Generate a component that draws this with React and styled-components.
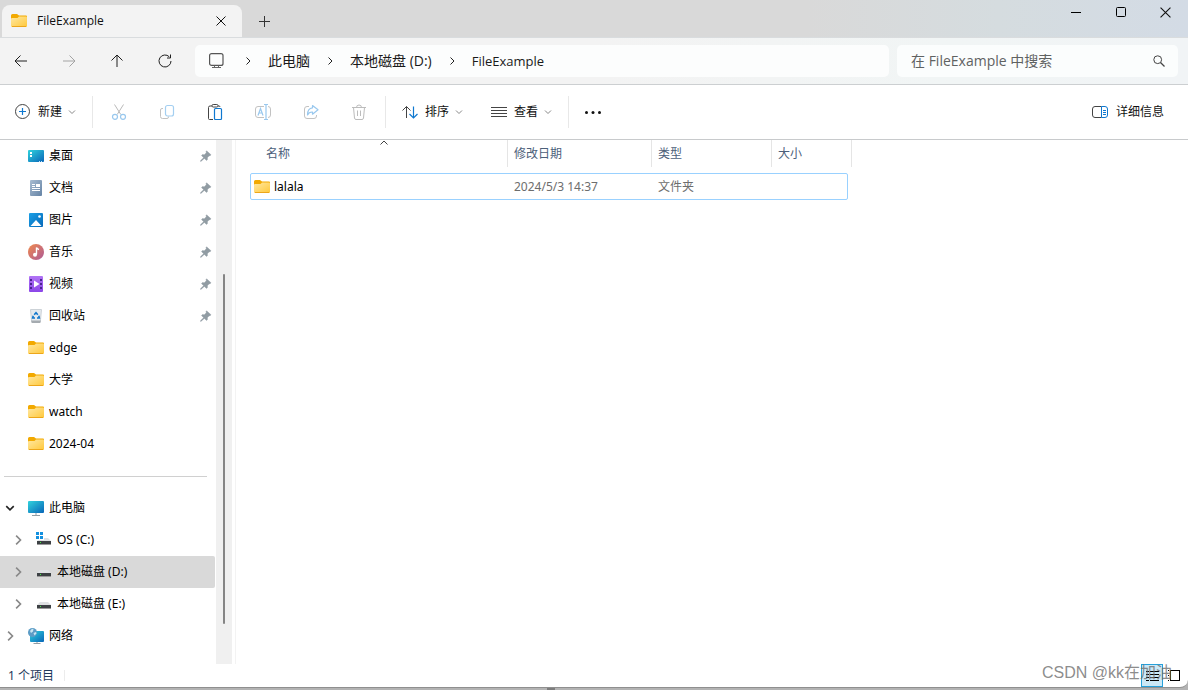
import React from 'react';
import styled, { createGlobalStyle, css } from 'styled-components';

const GlobalStyle = createGlobalStyle`
  * {
    box-sizing: border-box;
  }
  body {
    margin: 0;
    background: #ffffff;
    font-family: 'Noto Sans', 'Noto Sans CJK SC', sans-serif;
    font-size: 12px;
    line-height: 16px;
    color: #000000;
  }
  button, input {
    font: inherit;
    color: inherit;
  }
`;

const plainButton = css`
  display: flex;
  align-items: center;
  padding: 0;
  border: none;
  background: transparent;
`;

const Desktop = styled.div`
  display: flex;
  flex-direction: column;
  min-height: 100vh;
  background: #b3b3b3;
`;

const Window = styled.div`
  display: flex;
  flex: 1;
  flex-direction: column;
  border-bottom: 1px solid #8f8f8f;
  border-radius: 0 0 8px 0;
  background: #ffffff;
`;

/* ---------- title bar ---------- */

const TitleBar = styled.header`
  display: flex;
  align-items: flex-end;
  height: 38px;
  padding-left: 2px;
  border-bottom: 1px solid #d9dcde;
  background: linear-gradient(90deg, #d9d9d9 0%, #d9d9d9 68%, #d5dcdf 84%, #d3dbe5 100%);
`;

const Tab = styled.div`
  display: flex;
  align-items: center;
  width: 240px;
  height: 32px;
  padding: 0 12px 0 9px;
  border-radius: 8px 8px 0 0;
  background: #f3f3f3;
  gap: 10px;
`;

const TabTitle = styled.span`
  flex: 1;
  font-family: 'Open Sans', sans-serif;
  font-weight: 500;
  line-height: 18px;
  color: #111111;
`;

const SmallButton = styled.button`
  ${plainButton}
  justify-content: center;
  width: 18px;
  height: 18px;
`;

const NewTabButton = styled(SmallButton)`
  width: 44px;
  height: 32px;
`;

const WindowControls = styled.div`
  display: flex;
  align-self: flex-start;
  margin-left: auto;
`;

const WindowButton = styled.button`
  ${plainButton}
  justify-content: center;
  width: 45px;
  height: 24px;
`;

/* ---------- navigation bar ---------- */

const NavBar = styled.div`
  display: flex;
  align-items: center;
  height: 47px;
  padding: 0 10px 0 3px;
  gap: 12px;
  border-bottom: 1px solid #cccfd1;
  background: linear-gradient(90deg, #f3f3f3 0%, #f3f3f3 50%, #f1f5f5 80%, #f1f4f6 100%);
`;

const NavButton = styled.button`
  ${plainButton}
  justify-content: center;
  width: 36px;
  height: 36px;
  color: ${({ disabled }) => (disabled ? '#a3a3a3' : '#1f1f1f')};
`;

const Fields = styled.div`
  display: flex;
  flex: 1;
  gap: 8px;
`;

const Address = styled.nav`
  display: flex;
  flex: 1;
  align-items: center;
  height: 32px;
  padding-left: 11px;
  gap: 16px;
  border-radius: 5px;
  background: #fcfdfd;
`;

const Crumb = styled.button`
  ${plainButton}
  font-family: 'Open Sans', 'Noto Sans CJK SC', sans-serif;
  font-size: ${({ $current }) => ($current ? '13px' : '14px')};
  line-height: 20px;
  color: #1a1a1a;
  white-space: nowrap;
`;

const SearchBox = styled.label`
  display: flex;
  align-items: center;
  width: 281px;
  height: 32px;
  padding: 0 13px 0 14px;
  border-radius: 5px;
  background: #fbfdfd;
`;

const SearchInput = styled.input`
  flex: 1;
  min-width: 0;
  padding: 0;
  border: none;
  outline: none;
  background: transparent;
  font-family: 'Open Sans', 'Noto Sans CJK SC', sans-serif;
  font-size: 14px;
  line-height: 20px;
  &::placeholder {
    color: #5f6262;
    opacity: 1;
  }
`;

/* ---------- command bar ---------- */

const CommandBar = styled.div`
  display: flex;
  align-items: center;
  height: 55px;
  padding: 0 10px 0 1px;
  border-bottom: 1px solid #c8cacc;
`;

const CommandButton = styled.button`
  ${plainButton}
  height: 36px;
  padding: 0 14px;
  color: #111111;
  white-space: nowrap;
`;

const CommandLabel = styled.span`
  margin: 0 6px 0 7px;
`;

const DetailsButton = styled(CommandButton)`
  margin-left: auto;
  gap: 8px;
`;

const IconButton = styled.button`
  ${plainButton}
  justify-content: center;
  width: ${({ $narrow }) => ($narrow ? '44px' : '48px')};
  height: 36px;
`;

const Divider = styled.span`
  width: 1px;
  height: 32px;
  margin: 0 2px;
  background: #e8e8e8;
`;

/* ---------- body ---------- */

const Body = styled.div`
  display: flex;
  flex: 1;
`;

const Sidebar = styled.aside`
  width: 216px;
  padding: 0 1px 12px 0;
`;

const SideItem = styled.a`
  display: flex;
  align-items: center;
  height: 32px;
  padding: 0 3px 0 ${({ $level }) => ($level === 2 ? '12px' : '4px')};
  border-radius: 0 2px 2px 0;
  background: ${({ $selected }) => ($selected ? '#d9d9d9' : 'transparent')};
  color: #000000;
  text-decoration: none;
`;

const Expander = styled.span`
  display: flex;
  justify-content: center;
  width: 12px;
  margin-right: 12px;
`;

const SideLabel = styled.span`
  flex: 1;
  margin-left: 5px;
`;

const SideSeparator = styled.hr`
  height: 1px;
  margin: 16px 8px 15px 4px;
  border: none;
  background: #d0d0d0;
`;

const ScrollRail = styled.div`
  position: relative;
  width: 16px;
  margin-right: 3px;
  background: #f0f0f0;
`;

const ScrollThumb = styled.div`
  position: absolute;
  top: 25.6%;
  left: 7px;
  width: 2px;
  height: 66.8%;
  border-radius: 1px;
  background: #858585;
`;

const Content = styled.main`
  flex: 1;
  padding-left: 14px;
  border-left: 1px solid #f3f3f3;
`;

const FileTable = styled.table`
  display: block;
`;

const TableHead = styled.thead`
  display: block;
`;

const TableBody = styled.tbody`
  display: block;
`;

const HeadRow = styled.tr`
  display: grid;
  grid-template-columns: 248px 144px 120px 80px;
  padding-left: 10px;
`;

const HeadCell = styled.th`
  position: relative;
  height: 27px;
  padding: 6px;
  border-right: 1px solid #e5e5e5;
  font-weight: 400;
  text-align: left;
  color: #4c607a;
`;

const SortMark = styled.span`
  position: absolute;
  top: 0;
  left: 50%;
  display: flex;
  transform: translateX(-50%);
`;

const FileRow = styled.tr`
  display: grid;
  grid-template-columns: 257px 144px 120px 75px;
  width: 598px;
  height: 27px;
  margin-top: 6px;
  border: 1px solid #99d1ff;
  border-radius: 2px;
`;

const Cell = styled.td`
  display: flex;
  align-items: center;
  padding: 0 6px;
  color: #6d6d6d;
`;

const NameCell = styled(Cell)`
  padding: 0 3px;
  gap: 4px;
  color: #000000;
`;

/* ---------- status bar ---------- */

const StatusBar = styled.footer`
  position: relative;
  display: flex;
  align-items: center;
  height: 23px;
  padding: 0 3px 0 8px;
  color: #1e395b;
`;

const StatusDivider = styled.span`
  width: 1px;
  height: 11px;
  margin-left: 10px;
  background: #ececec;
`;

const ViewButtons = styled.div`
  display: flex;
  margin-left: auto;
`;

const ViewButton = styled.button`
  ${plainButton}
  justify-content: center;
  width: 22px;
  height: 23px;
  border: 1px solid ${({ $active }) => ($active ? '#26a0da' : 'transparent')};
  background: ${({ $active }) => ($active ? '#cbe8f6' : 'transparent')};
`;

const Watermark = styled.span`
  position: absolute;
  top: 0;
  right: 16px;
  font-family: 'Liberation Sans', 'Noto Sans CJK SC', sans-serif;
  font-size: 16px;
  line-height: 18px;
  color: rgba(110, 110, 110, 0.8);
  pointer-events: none;
`;

const BottomEdge = styled.div`
  display: flex;
  justify-content: center;
  height: 2px;
  padding-right: 86px;
`;

const EdgeGrip = styled.span`
  width: 8px;
  background: #7d7d7d;
`;

/* ---------- icons ---------- */

const Svg = ({ size = 16, width, height, children, ...rest }) => (
  <svg
    width={width || size}
    height={height || size}
    viewBox={`0 0 ${width || size} ${height || size}`}
    fill="none"
    aria-hidden="true"
    {...rest}
  >
    {children}
  </svg>
);

const FolderIcon = () => (
  <Svg>
    <defs>
      <linearGradient id="folderFace" x1="0" y1="0" x2="1" y2="1">
        <stop offset="0" stopColor="#ffe8a2" />
        <stop offset="1" stopColor="#ffc83a" />
      </linearGradient>
    </defs>
    <path d="M0 2.5Q0 1 1.5 1H6L8 2.5H15Q16 2.5 16 3.5V8H0Z" fill="#f2a900" />
    <path d="M0 6Q0 5 1 5H6.500L8 3.500H15Q16 3.500 16 4.500V13Q16 14 15 14H1Q0 14 0 13Z" fill="url(#folderFace)" />
    <path d="M1 13.500H15" stroke="#eda61a" />
  </Svg>
);

const DesktopIcon = () => (
  <Svg>
    <defs>
      <linearGradient id="blueScreen" x1="0" y1="0" x2="1" y2="1">
        <stop offset="0" stopColor="#31d3dd" />
        <stop offset="1" stopColor="#0865b8" />
      </linearGradient>
    </defs>
    <rect y="2" width="16" height="12" rx="1" fill="url(#blueScreen)" />
    <path d="M2 4h2v2H2zM2 7h2v2H2z" fill="#fff" />
    <path d="M11 13.500h1M13 13.500h1" stroke="#bfe3ff" />
  </Svg>
);

const DocumentIcon = () => (
  <Svg>
    <defs>
      <linearGradient id="docFace" x1="0" y1="0" x2="1" y2="1">
        <stop offset="0" stopColor="#a9bdd2" />
        <stop offset="1" stopColor="#6583a5" />
      </linearGradient>
    </defs>
    <rect x="2" width="12" height="16" rx="1" fill="url(#docFace)" />
    <path d="M4 4.500h3M4 6.500h3M4 8.500h8M4 10.500h8" stroke="#fff" />
    <path d="M8 4h4v3H8z" fill="#fff" />
  </Svg>
);

const PictureIcon = () => (
  <Svg>
    <defs>
      <linearGradient id="picFace" x1="0" y1="0" x2="1" y2="1">
        <stop offset="0" stopColor="#1ba0e6" />
        <stop offset="1" stopColor="#0668b9" />
      </linearGradient>
    </defs>
    <rect x="1" y="1" width="14" height="14" rx="1" fill="url(#picFace)" />
    <path d="M2.500 14L8 8l5.500 6z" fill="#fff" />
    <circle cx="11.500" cy="4.500" r="1.300" fill="#fff" />
  </Svg>
);

const MusicIcon = () => (
  <Svg>
    <defs>
      <linearGradient id="musicFace" x1="0" y1="0" x2="1" y2="1">
        <stop offset="0" stopColor="#f08a4c" />
        <stop offset="1" stopColor="#ad5a98" />
      </linearGradient>
    </defs>
    <circle cx="8" cy="8" r="8" fill="url(#musicFace)" />
    <path d="M8.500 10.500V3.500Q9 5 11 5.500" stroke="#fff" strokeWidth="1.400" />
    <circle cx="7" cy="10.700" r="2" fill="#fff" />
  </Svg>
);

const VideoIcon = () => (
  <Svg>
    <defs>
      <linearGradient id="videoFace" x1="0" y1="0" x2="0" y2="1">
        <stop offset="0" stopColor="#b174f5" />
        <stop offset="1" stopColor="#8b45e8" />
      </linearGradient>
    </defs>
    <rect x="1" width="14" height="16" rx="1" fill="url(#videoFace)" />
    <path d="M2 3h2v2H2zM2 7h2v2H2zM2 11h2v2H2zM12 3h2v2h-2zM12 7h2v2h-2zM12 11h2v2h-2z" fill="#4a2390" />
    <path d="M6 4.500L11.500 8 6 11.500z" fill="#fff" />
  </Svg>
);

const RecycleIcon = () => (
  <Svg>
    <path d="M2.500 1.500h11L12.300 14h-8.600z" fill="#e6eaee" stroke="#ccd2d7" />
    <path d="M3.300 12.500h9.400l-.4 2.500H3.700z" fill="#a5abb0" />
    <path d="M6.200 6.800L8 4.800l1.800 2M10.800 7.800l.5 2.200H9M7 10H4.700l.5-2.200" stroke="#1176cc" strokeWidth="1.600" />
  </Svg>
);

const ComputerIcon = () => (
  <Svg>
    <rect y="1" width="16" height="12" rx="1" fill="url(#blueScreen)" />
    <path d="M7 13h2v2H7z" fill="#c3ccd3" />
    <path d="M4 15.500h8" stroke="#929da5" />
  </Svg>
);

const DriveIcon = ({ system }) => (
  <Svg>
    <path d="M4 6h8l3 3H1z" fill="#dfe1e3" />
    <rect x="1" y="9" width="14" height="3" fill="#3d4144" />
    <path d="M1 12.500h14" stroke="#9a9a9a" />
    <path d="M4 10h1v1H4z" fill="#44ee44" />
    {system && (
      <>
        <rect width="8" height="8" fill="#fff" />
        <path d="M0 0h3v3H0zM4 0h3v3H4zM0 4h3v3H0zM4 4h3v3H4z" fill="#1390df" />
      </>
    )}
  </Svg>
);

const NetworkIcon = () => (
  <Svg>
    <rect x="2" y="3" width="14" height="11" rx="1" fill="url(#blueScreen)" />
    <path d="M9 14v1.500M5.500 15.500h7" stroke="#929da5" />
    <circle cx="4.500" cy="4.500" r="4.500" fill="#5c9cc6" />
    <path d="M2 3q2-3 3.500-2l-.5 2.500-2 1.500zM5.500 5l2.500-1 .5 1.500-2 2z" fill="#c9e6f2" />
  </Svg>
);

const PinIcon = () => (
  <Svg width={12} height={12}>
    <path
      d="M6.600 .8L11 4.800 9.900 6 9.200 5.800 7.400 7.700l.1 1.900L6.600 10.500 4.300 8.400 1.200 11.200.5 11.400.6 10.600 3.600 7.700 1.500 5.500 2.400 4.600l1.900 .1L6.300 2.800 6 1.700z"
      fill="#919ca3"
      stroke="#919ca3"
      strokeWidth="0.4"
    />
  </Svg>
);

const Chevron = ({ direction = 'down', size = 8, color = 'currentColor', weight = 1 }) => {
  const paths = {
    down: 'M1 2.500l3 3 3-3',
    right: 'M2.500 .5L6 4 2.500 7.500',
    up: 'M.5 4.500L4 1l3.500 3.500',
  };
  return (
    <svg width={size} height={size} viewBox="0 0 8 8" fill="none" aria-hidden="true">
      <path d={paths[direction]} stroke={color} strokeWidth={weight} />
    </svg>
  );
};

const CloseIcon = ({ size = 10 }) => (
  <svg width={size} height={size} viewBox="0 0 10 10" fill="none" aria-hidden="true">
    <path d="M.5 .5l9 9M9.500 .5l-9 9" stroke="#111" />
  </svg>
);

const CutIcon = () => (
  <Svg>
    <path d="M3.500 .5l6.300 10M12.500 .5l-6.300 10" stroke="#b9b9b9" />
    <circle cx="4" cy="12.800" r="2.500" stroke="#99c8ee" strokeWidth="1.200" />
    <circle cx="12" cy="12.800" r="2.500" stroke="#99c8ee" strokeWidth="1.200" />
  </Svg>
);

const CopyIcon = () => (
  <Svg>
    <path d="M4 4.500H3Q1.500 4.500 1.500 6v6.500q0 2 2 2H8q1.500 0 1.500-1.500v-.5" stroke="#c2c2c2" />
    <rect x="6.500" y="1.500" width="8" height="10.500" rx="2" stroke="#a4cff1" strokeWidth="1.200" />
  </Svg>
);

const PasteIcon = () => (
  <Svg>
    <path d="M5 2H3Q1.500 2 1.500 3.500v11q0 1 1 1H6M11 2h1q1 0 1 1" stroke="#444" />
    <rect x="5" y=".5" width="6" height="2.500" rx="1.200" stroke="#444" />
    <rect x="7.500" y="4.500" width="7" height="11" rx="1" stroke="#0f78d0" strokeWidth="1.200" fill="#fff" />
  </Svg>
);

const RenameIcon = () => (
  <Svg>
    <path d="M9 2.500H3Q.5 2.500 .5 5v6q0 2.500 2.500 2.500h6M13 2.500q2.500 0 2.500 2.500v6q0 2.500-2.500 2.500" stroke="#c2c2c2" />
    <path d="M9 .5h4M9 15.500h4M11 .5v15" stroke="#99c8ee" strokeWidth="1.200" />
    <path d="M3 11.500l2.500-7 2.500 7M4 9h3" stroke="#99c8ee" strokeWidth="1.200" />
  </Svg>
);

const ShareIcon = () => (
  <Svg>
    <path d="M6 2.500H4Q1.500 2.500 1.500 5v7q0 2.500 2.500 2.500h7q2.500 0 2.500-2.500v-1" stroke="#c2c2c2" />
    <path d="M9.500 1.500l5.500 4.300-5.500 4.400V8Q6 7.800 4.500 11 4.500 4.200 9.500 3.800z" stroke="#99c8ee" strokeWidth="1.200" strokeLinejoin="round" />
  </Svg>
);

const TrashIcon = () => (
  <Svg>
    <path d="M1 3.500h14M5.500 3.500Q5.500 1 8 1t2.500 2.500M2.500 3.500l1 10.500q.2 1.500 1.500 1.500h6q1.300 0 1.500-1.500l1-10.500M6.500 6.500v5.500M9.500 6.500v5.500" stroke="#bcbcbc" />
  </Svg>
);

const SortIcon = () => (
  <Svg>
    <path d="M4.500 14V2.500M.5 6.500l4-4 4 4" stroke="#444" />
    <path d="M11.500 2.500V14M7.500 10l4 4 4-4" stroke="#0f78d0" strokeWidth="1.200" />
  </Svg>
);

const ListIcon = () => (
  <Svg>
    <path d="M0 3.500h16M0 6.500h16M0 9.500h16M0 12.500h16" stroke="#444" />
  </Svg>
);

const NewIcon = () => (
  <Svg>
    <circle cx="7.500" cy="7.500" r="7" stroke="#444" />
    <path d="M7.500 4v7M4 7.500h7" stroke="#0f78d0" strokeWidth="1.200" />
  </Svg>
);

const MoreIcon = () => (
  <Svg>
    <circle cx="1.500" cy="8.500" r="1.500" fill="#111" />
    <circle cx="8" cy="8.500" r="1.500" fill="#111" />
    <circle cx="14.500" cy="8.500" r="1.500" fill="#111" />
  </Svg>
);

const DetailsIcon = () => (
  <Svg>
    <path d="M9.500 2.500H3Q.5 2.500 .5 5v6q0 2.500 2.500 2.500h6.500" stroke="#444" />
    <path d="M9.500 2.500H13q2.500 0 2.500 2.500v6q0 2.500-2.500 2.500H9.500zM11 6.500h3M11 8.500h3M11 10.500h3" stroke="#0f78d0" />
  </Svg>
);

const MonitorIcon = () => (
  <Svg width={22} height={20}>
    <rect x="3.600" y="2.600" width="13.400" height="11.800" rx="2" stroke="#555" strokeWidth="1.200" />
    <path d="M8.500 14.500v2M12.500 14.500v2M6 16.500h9" stroke="#666" />
  </Svg>
);

const ArrowIcon = ({ direction }) => {
  const paths = {
    back: 'M14 8H2M7.500 2.500L2 8l5.500 5.500',
    forward: 'M2 8h12M8.500 2.500L14 8l-5.500 5.500',
    up: 'M8 14V2M2.500 7.500L8 2l5.500 5.500',
  };
  return (
    <Svg>
      <path d={paths[direction]} stroke="currentColor" />
    </Svg>
  );
};

const RefreshIcon = () => (
  <Svg>
    <path d="M12.300 3.800A6 6 0 1 0 14 8M13.500 1.500v3.500H10" stroke="currentColor" />
  </Svg>
);

const SearchIcon = () => (
  <Svg width={12} height={12}>
    <circle cx="4.700" cy="4.700" r="3.900" stroke="#444" />
    <path d="M7.500 7.500l4 4" stroke="#444" strokeWidth="1.200" />
  </Svg>
);

const quickAccess = [
  { label: '桌面', Icon: DesktopIcon, pinned: true },
  { label: '文档', Icon: DocumentIcon, pinned: true },
  { label: '图片', Icon: PictureIcon, pinned: true },
  { label: '音乐', Icon: MusicIcon, pinned: true },
  { label: '视频', Icon: VideoIcon, pinned: true },
  { label: '回收站', Icon: RecycleIcon, pinned: true },
  { label: 'edge', Icon: FolderIcon },
  { label: '大学', Icon: FolderIcon },
  { label: 'watch', Icon: FolderIcon },
  { label: '2024-04', Icon: FolderIcon },
];

const SystemDriveIcon = () => <DriveIcon system />;

const tree = [
  { label: '此电脑', Icon: ComputerIcon, expander: 'down' },
  { label: 'OS (C:)', Icon: SystemDriveIcon, expander: 'right', level: 2 },
  { label: '本地磁盘 (D:)', Icon: DriveIcon, expander: 'right', level: 2, selected: true },
  { label: '本地磁盘 (E:)', Icon: DriveIcon, expander: 'right', level: 2 },
  { label: '网络', Icon: NetworkIcon, expander: 'right' },
];

const editCommands = [
  { name: '剪切', Icon: CutIcon, disabled: true },
  { name: '复制', Icon: CopyIcon, disabled: true },
  { name: '粘贴', Icon: PasteIcon },
  { name: '重命名', Icon: RenameIcon, disabled: true },
  { name: '共享', Icon: ShareIcon, disabled: true },
  { name: '删除', Icon: TrashIcon, disabled: true },
];

const crumbs = ['此电脑', '本地磁盘 (D:)', 'FileExample'];

const files = [{ name: 'lalala', date: '2024/5/3 14:37', type: '文件夹', size: '' }];

const SideEntry = ({ label, Icon, pinned, expander, level, selected }) => (
  <SideItem href="#" $level={level} $selected={selected}>
    <Expander>
      {expander && (
        <Chevron
          direction={expander}
          size={10}
          color={expander === 'down' ? '#222' : '#888'}
          weight={1.3}
        />
      )}
    </Expander>
    <Icon />
    <SideLabel>{label}</SideLabel>
    {pinned && <PinIcon />}
  </SideItem>
);

const DropCommand = ({ label, Icon }) => (
  <CommandButton type="button">
    <Icon />
    <CommandLabel>{label}</CommandLabel>
    <Chevron color="#888" />
  </CommandButton>
);

const App = () => {
  return (
    <Desktop>
      <GlobalStyle />
      <Window>
        <TitleBar>
          <Tab>
            <FolderIcon />
            <TabTitle>FileExample</TabTitle>
            <SmallButton type="button" aria-label="关闭标签页">
              <CloseIcon />
            </SmallButton>
          </Tab>
          <NewTabButton type="button" aria-label="新建标签页">
            <Svg size={11}>
              <path d="M5.500 0v11M0 5.500h11" stroke="#333" />
            </Svg>
          </NewTabButton>
          <WindowControls>
            <WindowButton type="button" aria-label="最小化">
              <Svg size={10}>
                <path d="M0 5.500h10" stroke="#000" />
              </Svg>
            </WindowButton>
            <WindowButton type="button" aria-label="最大化">
              <Svg size={10}>
                <rect x=".5" y=".5" width="9" height="9" rx="1" stroke="#000" />
              </Svg>
            </WindowButton>
            <WindowButton type="button" aria-label="关闭">
              <CloseIcon size={11} />
            </WindowButton>
          </WindowControls>
        </TitleBar>

        <NavBar>
          <NavButton type="button" aria-label="后退">
            <ArrowIcon direction="back" />
          </NavButton>
          <NavButton type="button" aria-label="前进" disabled>
            <ArrowIcon direction="forward" />
          </NavButton>
          <NavButton type="button" aria-label="向上">
            <ArrowIcon direction="up" />
          </NavButton>
          <NavButton type="button" aria-label="刷新">
            <RefreshIcon />
          </NavButton>
          <Fields>
            <Address aria-label="地址">
              <MonitorIcon />
              {crumbs.map((crumb, index) => (
                <React.Fragment key={crumb}>
                  <Chevron direction="right" color="#222" />
                  <Crumb type="button" $current={index === crumbs.length - 1}>
                    {crumb}
                  </Crumb>
                </React.Fragment>
              ))}
            </Address>
            <SearchBox>
              <SearchInput type="text" aria-label="搜索" placeholder="在 FileExample 中搜索" />
              <SearchIcon />
            </SearchBox>
          </Fields>
        </NavBar>

        <CommandBar>
          <DropCommand label="新建" Icon={NewIcon} />
          <Divider />
          {editCommands.map(({ name, Icon, disabled }) => (
            <IconButton key={name} type="button" aria-label={name} disabled={disabled}>
              <Icon />
            </IconButton>
          ))}
          <Divider />
          <DropCommand label="排序" Icon={SortIcon} />
          <DropCommand label="查看" Icon={ListIcon} />
          <Divider />
          <IconButton type="button" aria-label="更多" $narrow>
            <MoreIcon />
          </IconButton>
          <DetailsButton type="button">
            <DetailsIcon />
            详细信息
          </DetailsButton>
        </CommandBar>

        <Body>
          <Sidebar>
            {quickAccess.map((item) => (
              <SideEntry key={item.label} {...item} />
            ))}
            <SideSeparator />
            {tree.map((item) => (
              <SideEntry key={item.label} {...item} />
            ))}
          </Sidebar>
          <ScrollRail>
            <ScrollThumb />
          </ScrollRail>
          <Content>
            <FileTable>
              <TableHead>
                <HeadRow>
                  <HeadCell scope="col">
                    名称
                    <SortMark>
                      <Chevron direction="up" color="#444" />
                    </SortMark>
                  </HeadCell>
                  <HeadCell scope="col">修改日期</HeadCell>
                  <HeadCell scope="col">类型</HeadCell>
                  <HeadCell scope="col">大小</HeadCell>
                </HeadRow>
              </TableHead>
              <TableBody>
                {files.map((file) => (
                  <FileRow key={file.name}>
                    <NameCell>
                      <FolderIcon />
                      {file.name}
                    </NameCell>
                    <Cell>{file.date}</Cell>
                    <Cell>{file.type}</Cell>
                    <Cell>{file.size}</Cell>
                  </FileRow>
                ))}
              </TableBody>
            </FileTable>
          </Content>
        </Body>

        <StatusBar>
          1 个项目
          <StatusDivider />
          <ViewButtons>
            <ViewButton type="button" aria-label="详细信息视图" $active>
              <Svg width={13} height={12}>
                <path
                  d="M0 1.500h3M4 1.500h9M0 4.500h3M4 4.500h9M0 7.500h3M4 7.500h9M0 10.500h3M4 10.500h9"
                  stroke="#000"
                />
              </Svg>
            </ViewButton>
            <ViewButton type="button" aria-label="大图标视图">
              <Svg width={12} height={12}>
                <path d="M0 .5h1M0 5.500h1M0 10.500h1" stroke="#000" />
                <rect x="2.500" y=".5" width="9" height="10" stroke="#000" />
              </Svg>
            </ViewButton>
          </ViewButtons>
          <Watermark>CSDN @kk在加油</Watermark>
        </StatusBar>
      </Window>
      <BottomEdge>
        <EdgeGrip />
      </BottomEdge>
    </Desktop>
  );
};

export default App;
